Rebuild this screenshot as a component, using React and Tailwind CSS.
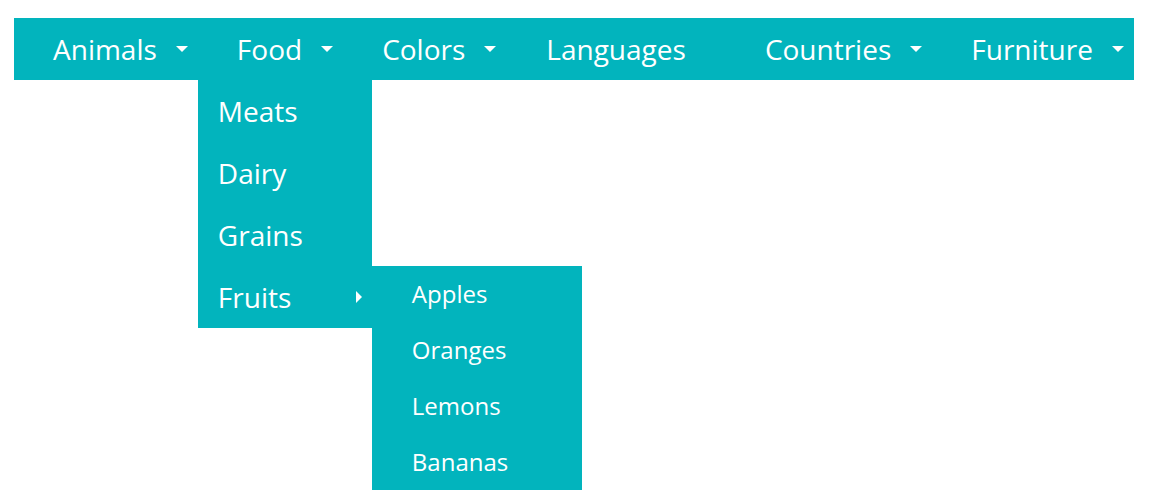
import React from 'react';

const items = [
  { label: 'Animals', caret: true },
  { label: 'Food', caret: true, open: true },
  { label: 'Colors', caret: true },
  { label: 'Languages', caret: false },
  { label: 'Countries', caret: true },
  { label: 'Furniture', caret: true },
];

const food = ['Meats', 'Dairy', 'Grains', 'Fruits'];
const fruits = ['Apples', 'Oranges', 'Lemons', 'Bananas'];

function CaretDown() {
  return (
    <svg width="12" height="6" viewBox="0 0 12 6" className="ml-[19px] shrink-0">
      <path d="M0 0 L12 0 L6 6 Z" fill="white" />
    </svg>
  );
}

function CaretRight() {
  return (
    <svg width="6" height="12" viewBox="0 0 6 12">
      <path d="M0 0 L6 6 L0 12 Z" fill="white" />
    </svg>
  );
}

export default function App() {
  return (
    <div className="min-h-[496px] bg-white pt-[18px] px-[14px] font-['Open_Sans',sans-serif] font-medium text-white">
      <nav className="flex h-[62px] w-[1120px] bg-[#02b4bd]">
        {items.map((item) => (
          <div
            key={item.label}
            className={`relative flex h-full items-center text-[28px] leading-none ${item.caret ? 'pl-[39px] pr-[10px]' : 'px-[40px]'}`}
          >
            <span>{item.label}</span>
            {item.caret && <CaretDown />}

            {item.open && (
              <div className="absolute left-0 top-full w-[174px] bg-[#02b4bd]">
                {food.map((f) => (
                  <div key={f} className="relative flex h-[62px] items-center justify-between pl-[20px] pr-[10px] text-[28px]">
                    <span>{f}</span>
                    {f === 'Fruits' && (
                      <>
                        <CaretRight />
                        <div className="absolute left-full top-0 w-[210px] bg-[#02b4bd]">
                          {fruits.map((s) => (
                            <div key={s} className="flex h-[56px] items-center pl-[40px] text-[24px]">
                              {s}
                            </div>
                          ))}
                        </div>
                      </>
                    )}
                  </div>
                ))}
              </div>
            )}
          </div>
        ))}
      </nav>
    </div>
  );
}
